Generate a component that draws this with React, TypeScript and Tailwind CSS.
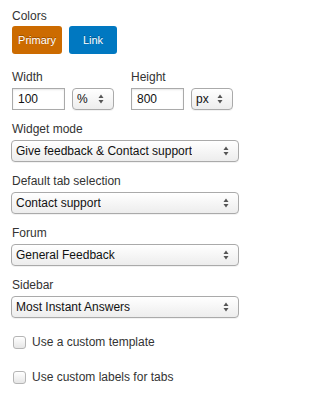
import React from "react"

const font = { fontFamily: '"Liberation Sans", Arial, sans-serif' }

function Arrows() {
  return (
    <svg width="6" height="10" viewBox="0 0 6 10" className="shrink-0">
      <path d="M3 0.5 L5.5 4 L0.5 4 Z" fill="#555" />
      <path d="M3 9.5 L5.5 6 L0.5 6 Z" fill="#555" />
    </svg>
  )
}

function Select({ value, className = "" }: { value: string; className?: string }) {
  return (
    <div
      className={`flex h-[22px] items-center justify-between rounded-[4px] border border-[#aaaaaa] bg-gradient-to-b from-white to-[#ededed] pl-[4px] pr-[9px] text-[12px] text-[#111] shadow-[0_1px_0_rgba(0,0,0,0.05)] ${className}`}
    >
      <span className="truncate">{value}</span>
      <Arrows />
    </div>
  )
}

function Field({ label, value }: { label: string; value: string }) {
  return (
    <div className="flex flex-col">
      <span className="h-[14px] text-[12px] leading-[14px] text-[#333]">{label}</span>
      <Select value={value} className="mt-[4px] w-[228px] -ml-px" />
    </div>
  )
}

function Check({ label }: { label: string }) {
  return (
    <label className="flex items-center gap-[6px] text-[12px] leading-[14px] text-[#333]">
      <span className="ml-px h-[13px] w-[13px] rounded-[3px] border border-[#b5b5b5] bg-gradient-to-b from-white to-[#e6e6e6]" />
      {label}
    </label>
  )
}

function SizeField({ label, value, unit }: { label: string; value: string; unit: string }) {
  return (
    <div className="flex flex-col">
      <span className="h-[14px] text-[12px] leading-[14px] text-[#333]">{label}</span>
      <div className="mt-[4px] flex gap-[7px]">
        <div className="flex h-[22px] w-[53px] items-center border border-[#aaaaaa] pl-[5px] text-[12px] text-[#111] shadow-[inset_0_1px_2px_rgba(0,0,0,0.1)]">
          {value}
        </div>
        <Select value={unit} className="w-[42px] pr-[7px]" />
      </div>
    </div>
  )
}

export default function App() {
  return (
    <div className="h-[399px] w-[252px] bg-white pl-[12px] pt-[9px]" style={font}>
      <span className="block h-[14px] text-[12px] leading-[14px] text-[#333]">Colors</span>
      <div className="mt-[3px] flex gap-[7px]">
        <button className="h-[28px] w-[50px] rounded-[3px] bg-[#cc6b00] text-[11px] text-white [text-shadow:0_-1px_0_rgba(0,0,0,0.3)]">
          Primary
        </button>
        <button className="h-[28px] w-[48px] rounded-[3px] bg-[#0078c1] text-[11px] text-white [text-shadow:0_-1px_0_rgba(0,0,0,0.3)]">
          Link
        </button>
      </div>

      <div className="mt-[16px] flex gap-[17px]">
        <SizeField label="Width" value="100" unit="%" />
        <SizeField label="Height" value="800" unit="px" />
      </div>

      <div className="mt-[12px] flex flex-col gap-[12px]">
        <Field label="Widget mode" value="Give feedback & Contact support" />
        <Field label="Default tab selection" value="Contact support" />
        <Field label="Forum" value="General Feedback" />
        <Field label="Sidebar" value="Most Instant Answers" />
      </div>

      <div className="mt-[17px] flex flex-col gap-[21px]">
        <Check label="Use a custom template" />
        <Check label="Use custom labels for tabs" />
      </div>
    </div>
  )
}
